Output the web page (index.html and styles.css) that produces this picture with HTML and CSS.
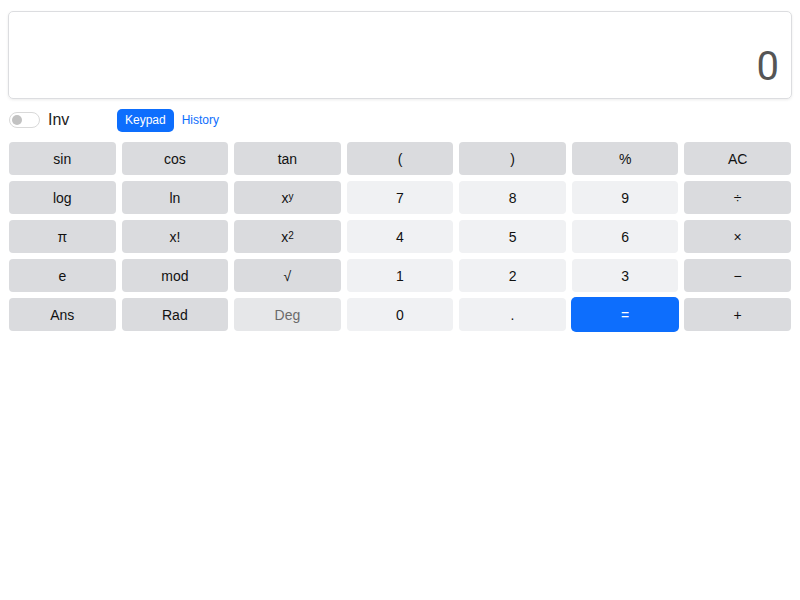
FILE: index.html
```html
<!DOCTYPE html>
<html>
<head>
<meta charset="utf-8">
<link rel="stylesheet" href="styles.css">
</head>
<body>
<div class="calc">
  <div class="display"><span class="value">0</span></div>
  <div class="controls">
    <label class="inv"><span class="switch"><span class="knob"></span></span><span class="inv-label">Inv</span></label>
    <div class="tabs">
      <span class="tab active">Keypad</span>
      <span class="tab">History</span>
    </div>
  </div>
  <div class="keys">
    <button class="key fn">sin</button>
    <button class="key fn">cos</button>
    <button class="key fn">tan</button>
    <button class="key fn">(</button>
    <button class="key fn">)</button>
    <button class="key fn">%</button>
    <button class="key fn">AC</button>

    <button class="key fn">log</button>
    <button class="key fn">ln</button>
    <button class="key fn">x<sup>y</sup></button>
    <button class="key num">7</button>
    <button class="key num">8</button>
    <button class="key num">9</button>
    <button class="key fn">÷</button>

    <button class="key fn">π</button>
    <button class="key fn">x!</button>
    <button class="key fn">x<sup>2</sup></button>
    <button class="key num">4</button>
    <button class="key num">5</button>
    <button class="key num">6</button>
    <button class="key fn">×</button>

    <button class="key fn">e</button>
    <button class="key fn">mod</button>
    <button class="key fn">√</button>
    <button class="key num">1</button>
    <button class="key num">2</button>
    <button class="key num">3</button>
    <button class="key fn">−</button>

    <button class="key fn">Ans</button>
    <button class="key fn">Rad</button>
    <button class="key fn off">Deg</button>
    <button class="key num">0</button>
    <button class="key num">.</button>
    <button class="key eq">=</button>
    <button class="key fn">+</button>
  </div>
</div>
</body>
</html>
```

FILE: styles.css
```css
html, body {
  margin: 0;
  padding: 0;
  background: #fff;
}
body {
  padding: 8px;
  font-family: "Liberation Sans", Arial, sans-serif;
  color: #000;
}
.calc {
  display: flex;
  flex-direction: column;
}
.display {
  margin-top: 3px;
  height: 88px;
  box-sizing: border-box;
  border: 1px solid #dcdde0;
  border-radius: 5px;
  box-shadow: 0 1px 3px rgba(0,0,0,0.08);
  display: flex;
  align-items: flex-end;
  justify-content: flex-end;
  padding: 0 12px 11px 12px;
}
.display .value {
  font-family: Roboto, "Liberation Sans", sans-serif;
  font-size: 40px;
  line-height: 40px;
  color: #555;
}
.controls {
  display: flex;
  align-items: center;
  height: 24px;
  margin-top: 9px;
  padding-left: 1px;
}
.inv {
  display: flex;
  align-items: center;
  width: 108px;
}
.switch {
  height: 14px;
  width: 27px;
  border: 1px solid #d9d9d9;
  border-radius: 8px;
  display: flex;
  align-items: center;
  padding-left: 2px;
  box-sizing: content-box;
}
.knob {
  width: 10px;
  height: 10px;
  border-radius: 50%;
  background: #c2c2c2;
}
.inv-label {
  margin-left: 8px;
  font-size: 16px;
  color: #222;
}
.tabs {
  display: flex;
  align-items: center;
}
.tab {
  font-size: 12px;
  color: #0d6efd;
  padding: 5px 8px;
  line-height: 13px;
  border-radius: 5px;
}
.tab.active {
  background: #0d6efd;
  color: #fff;
}
.keys {
  margin-top: 10px;
  padding: 0 1px;
  display: grid;
  grid-template-columns: repeat(7, 1fr);
  grid-auto-rows: 33px;
  column-gap: 6px;
  row-gap: 6px;
}
.key {
  border: none;
  border-radius: 4px;
  font-family: "Liberation Sans", Arial, sans-serif;
  font-size: 14px;
  color: #111;
  padding: 0;
  display: flex;
  align-items: center;
  justify-content: center;
}
.key sup {
  font-size: 10px;
  line-height: 0;
  position: relative;
  top: -1px;
}
.fn {
  background: #dadbde;
}
.num {
  background: #f0f1f3;
}
.off {
  background: #e6e7e9;
  color: #6b6b6b;
}
.eq {
  background: #0d6efd;
  color: #fff;
  margin: -1px;
  border-radius: 5px;
}
```
